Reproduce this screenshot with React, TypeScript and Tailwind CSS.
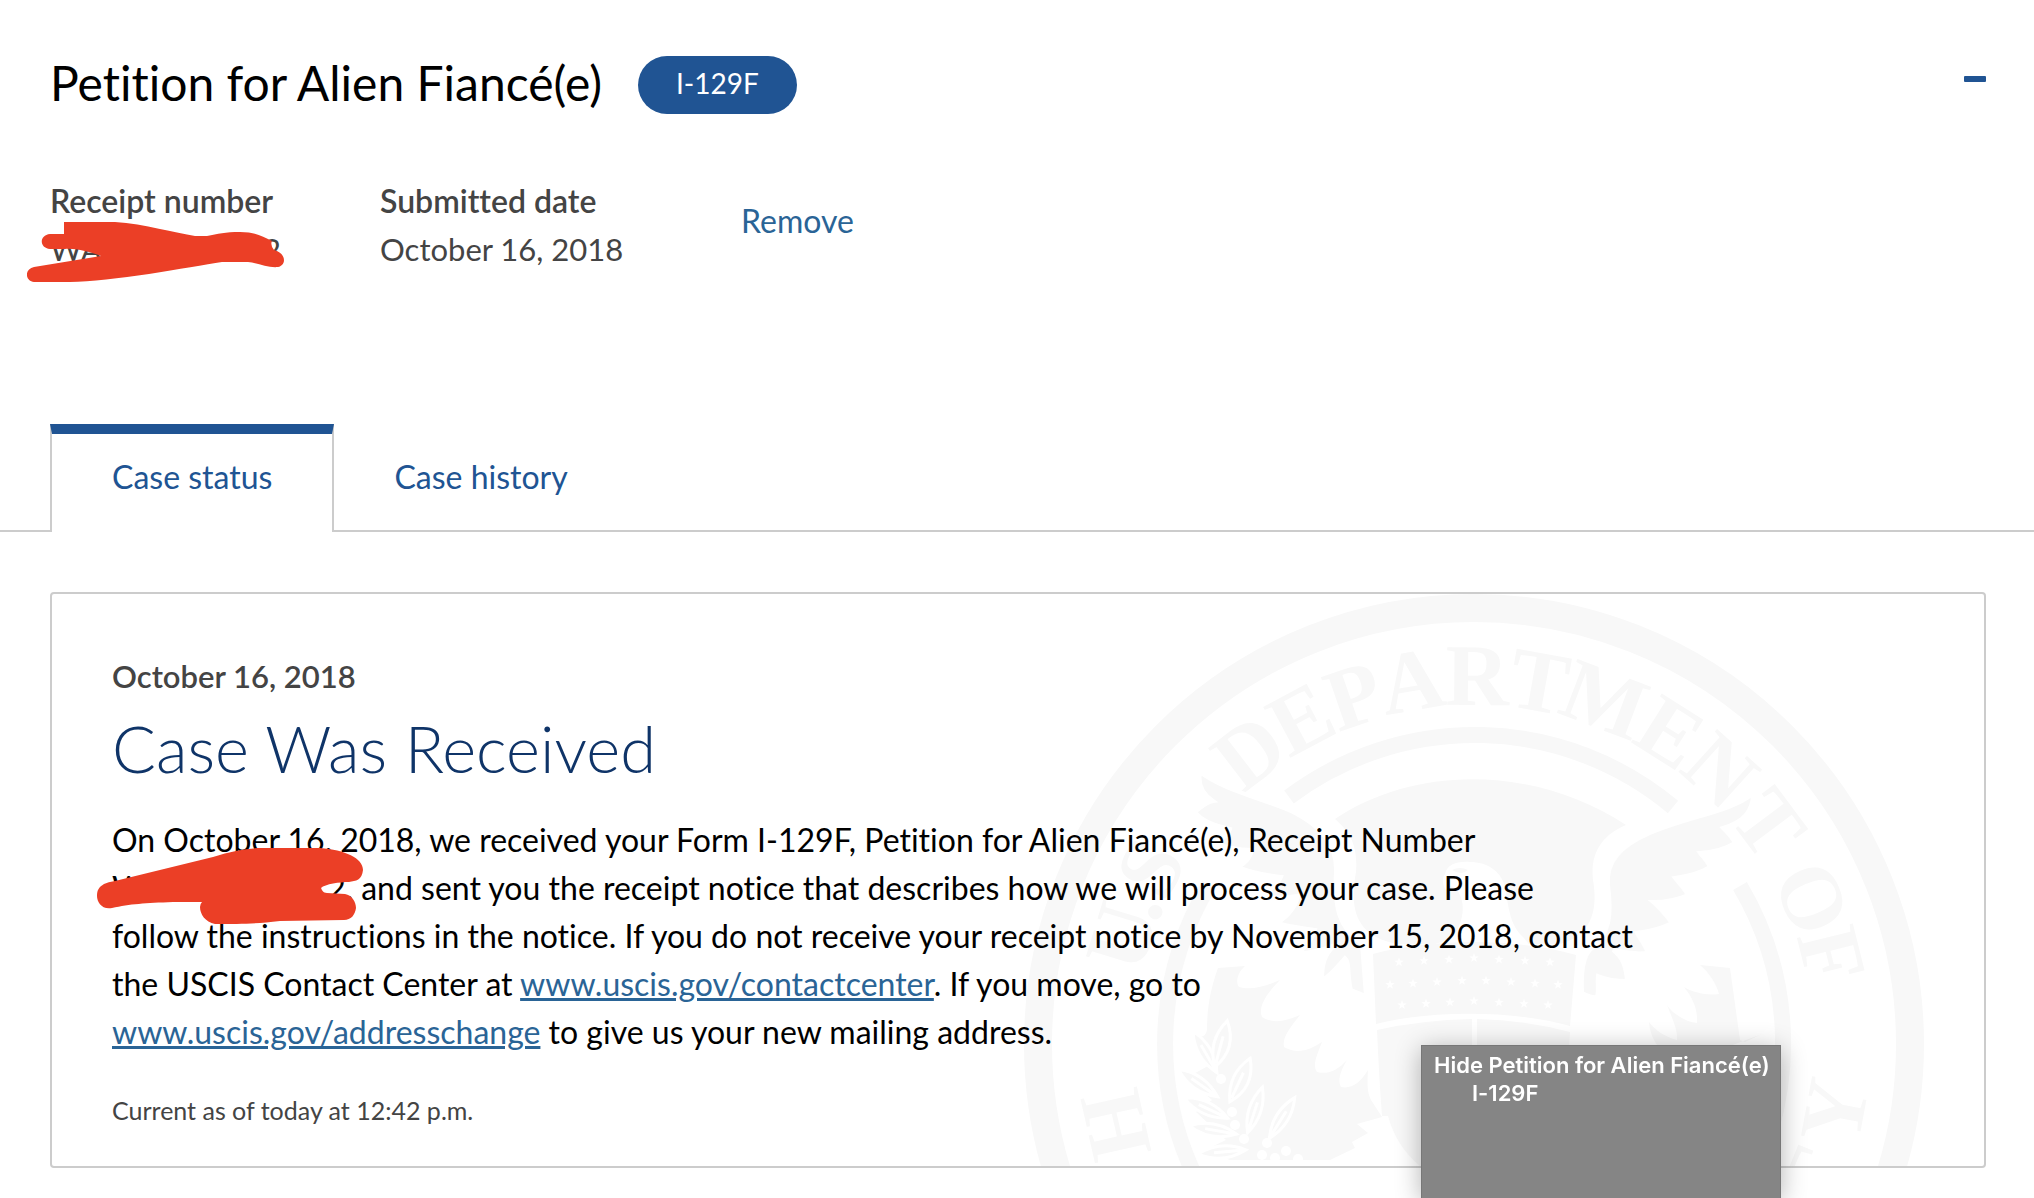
import { useState } from "react";

const TINT = "#f8f8f8";

const topLetters: [string, number][] = [
  ["U", -73], [".", -67.5], ["S", -61.5],
  ["D", -37.6], ["E", -28], ["P", -19], ["A", -9.7], ["R", 0.5],
  ["T", 10.2], ["M", 20.8], ["E", 32.2], ["N", 42], ["T", 53.2],
  ["O", 66.7], ["F", 76],
];
const bottomLetters: [string, number][] = [
  ["H", 77.3], ["O", 65], ["Y", -79.5], ["T", -68],
];

const starRows = [
  { y: 958, xs: [1399, 1424, 1449, 1474, 1499, 1525, 1550] },
  { y: 980, xs: [1390, 1413, 1437, 1462, 1486, 1511, 1535, 1558] },
  { y: 1001, xs: [1402, 1426, 1450, 1474, 1499, 1524, 1548] },
];

const leaves: [number, number, number, number][] = [
  [1205, 1052, 8, -30], [1221, 1044, 10, 15], [1198, 1083, 9, -55], [1240, 1080, 10, 25],
  [1206, 1108, 9, -65], [1255, 1110, 9, 18], [1282, 1118, 9, 32], [1213, 1130, 9, -80],
  [1222, 1152, 9, -95],
];
const berries = [
  [1221, 1079], [1232, 1112], [1244, 1139], [1267, 1143], [1286, 1151], [1262, 1155], [1235, 1125], [1298, 1159], [1275, 1158],
];

function Seal() {
  return (
    <svg viewBox="1024 594 900 900" className="absolute top-0 right-[60px] h-[900px] w-[900px]" aria-hidden="true">
      <circle cx="1474" cy="1044" r="436" fill="none" stroke={TINT} strokeWidth="28" />
      <g fill="none" stroke={TINT} strokeWidth="16">
        <path d="M1289 797A309 309 0 0 1 1673 807" />
        <path d="M1209 885A309 309 0 0 0 1193 1172" />
        <path d="M1740 886A309 309 0 0 1 1755 1172" />
      </g>
      <g fill={TINT} textAnchor="middle" fontFamily="Liberation Serif, serif" fontSize="88" fontWeight="700">
        {topLetters.map(([c, a], i) => (
          <text key={i} x="1474" y="705" transform={`rotate(${a} 1474 1044)`}>{c}</text>
        ))}
        {bottomLetters.map(([c, a], i) => (
          <text key={i} x="1474" y="1440" transform={`rotate(${a} 1474 1044)`}>{c}</text>
        ))}
      </g>
      {/* sky behind the eagle */}
      <path
        fill={TINT}
        d="M1335 819C1415 765 1535 765 1626 825C1602 835 1590 853 1593 880C1599 915 1588 936 1560 944L1396 944C1360 936 1348 915 1356 872C1358 845 1350 832 1335 819Z"
      />
      {/* head and neck */}
      <path
        fill="#ffffff"
        d="M1445 874C1447 864 1458 861 1470 862C1487 862 1500 871 1504 884C1509 904 1508 924 1524 938L1530 946H1428C1445 942 1456 936 1459 926C1464 914 1464 902 1459 893C1454 885 1449 884 1446 890C1442 884 1442 878 1445 874Z"
      />
      <path fill={TINT} d="M1452 870Q1460 866 1468 870Q1462 876 1452 870Z" />
      {/* wings */}
      <g fill={TINT} stroke="#ffffff" strokeWidth="4">
        <path d="M1200 772C1222 790 1268 800 1293 812C1325 828 1337 848 1336 872C1334 905 1338 928 1362 944L1366 996L1351 990C1347 975 1350 962 1345 958C1338 966 1330 976 1322 980C1322 965 1324 955 1335 945C1322 950 1310 953 1298 953C1308 945 1313 938 1315 930C1302 928 1290 927 1277 923C1290 915 1296 905 1298 896C1284 898 1268 898 1262 895C1272 889 1278 884 1281 877C1265 875 1250 872 1238 867C1248 862 1251 855 1252 850C1238 850 1222 846 1216 843C1224 838 1229 834 1230 829C1215 826 1201 820 1195 812C1202 806 1207 802 1213 801C1201 793 1198 783 1200 772Z" />
        <path d="M1753 794C1730 812 1690 816 1650 833C1620 846 1606 862 1608 885C1612 915 1610 935 1590 950C1583 957 1581 970 1582 993C1588 996 1592 998 1597 997C1599 990 1597 982 1598 976C1608 980 1618 981 1627 981C1626 967 1623 958 1613 950C1625 953 1637 954 1648 953C1645 945 1640 939 1637 933C1652 931 1662 928 1672 923C1665 914 1660 908 1653 902C1666 902 1679 899 1688 895C1684 888 1679 883 1675 878C1690 876 1702 872 1710 867C1707 861 1703 857 1700 853C1714 852 1727 848 1735 843C1732 837 1727 832 1723 828C1742 822 1753 812 1753 794Z" />
      </g>
      {/* shield */}
      <path fill={TINT} d="M1373 954C1435 938 1515 938 1576 955L1570 1026C1515 1010 1430 1010 1376 1024Z" />
      <path fill={TINT} d="M1377 1030Q1422 1020 1472 1019V1166H1420Q1396 1146 1388 1116H1382Q1379 1076 1377 1030Z" />
      <path fill={TINT} d="M1477 1019Q1525 1020 1570 1032L1562 1166H1477Z" />
      {starRows.map((row) =>
        row.xs.map((x) => (
          <path
            key={`${x}-${row.y}`}
            fill="#ffffff"
            transform={`translate(${x} ${row.y + Math.abs(x - 1474) / 18})`}
            d="M0 -5L1.2 -1.6L4.8 -1.5L1.9 .6L2.9 4L0 2L-2.9 4L-1.9 .6L-4.8 -1.5L-1.2 -1.6Z"
          />
        )),
      )}
      {/* leg feathers */}
      <path
        fill={TINT}
        d="M1218 968L1245 966C1238 972 1235 982 1239 987C1252 991 1268 985 1280 980C1265 995 1258 1008 1262 1017C1275 1025 1288 1020 1300 1015C1290 1028 1282 1037 1284 1047C1297 1055 1310 1050 1322 1042C1317 1055 1312 1065 1317 1072C1328 1075 1338 1070 1347 1060C1341 1070 1337 1080 1341 1087C1352 1089 1360 1083 1368 1070C1367 1085 1367 1095 1373 1103L1382 1117L1357 1124L1368 1133L1352 1142L1355 1148L1330 1160H1230L1205 1150L1226 1140L1196 1112L1212 1100L1186 1078L1208 1066L1194 1034C1202 1040 1206 1035 1207 1030C1207 1010 1210 990 1218 968Z"
      />
      <path
        fill={TINT}
        d="M1730 968L1700 965C1709 972 1717 985 1719 994C1707 996 1692 992 1684 987C1693 998 1698 1010 1697 1023C1685 1022 1672 1013 1667 1005C1672 1018 1678 1030 1677 1040C1665 1037 1655 1030 1649 1022C1650 1035 1655 1044 1664 1053L1640 1080L1762 1034L1745 1042L1740 1040Z"
      />
      {/* olive branch */}
      <g fill={TINT} stroke="#ffffff" strokeWidth="3">
        {leaves.map(([x, y, w, a]) => (
          <path key={`${x}-${y}`} transform={`translate(${x} ${y}) rotate(${a})`} d={w > 9 ? "M0 -24Q17 0 0 24Q-14 0 0 -24ZM0 20V-8" : "M0 -24Q12 0 0 24Q-12 0 0 -24ZM0 20V-8"} />
        ))}
      </g>
      {berries.map(([x, y]) => (
        <circle key={`${x}-${y}`} cx={x} cy={y} r="5" fill="#ffffff" />
      ))}
    </svg>
  );
}

function ReceiptMark() {
  return (
    <svg viewBox="27 221 258 60" className="absolute -top-[3px] -left-[23px] h-[60px] w-[258px] max-w-none" aria-hidden="true">
      <path
        fill="#eb3f26"
        d="M64 221H115C145 223 175 232 195 235H207C218 233 225 231 240 231C255 231 262 235 272 240Q270 244 274 249C286 252 287 264 278 266C268 267 258 262 248 261H222C190 266 110 281 70 281H34C25 280 24 268 34 266L101 255C90 251 75 247 65 248H50C39 247 39 234 50 233H64Z"
      />
    </svg>
  );
}

function NoticeMark() {
  return (
    <svg viewBox="97 848 267 77" className="absolute -top-4 -left-[15px] h-[77px] w-[267px] max-w-none" aria-hidden="true">
      <path
        fill="#eb3f26"
        d="M104 884Q108 882 115 881L213 857C232 851 248 848 262 848H320C345 850 363 858 363 870C362 880 356 881 349 882C340 882 325 884 321 888C322 890 323 893 327 893L345 894C352 895 356 902 356 908C355 915 351 920 344 920L280 921C255 924 240 924 215 924C205 922 200 914 200 907Q200 904 202 902H173C145 903 130 904 112 908C102 910 97 902 97 896C97 890 99 887 104 884Z"
      />
    </svg>
  );
}

export default function App() {
  const [tab, setTab] = useState("status");
  const active =
    "-mb-[2px] border-x-2 border-t-10 border-x-[#cccccc] border-t-[#205493] bg-white px-[60px] pt-[19px] pb-[31px] text-[32px] text-[#205493]";
  const idle = "-mb-[2px] border-t-10 border-transparent px-[60px] pt-[19px] pb-[31px] text-[32px] text-[#205493]";

  return (
    <main className="min-h-screen overflow-hidden bg-white pb-[30px] font-['Lato',sans-serif] text-[32px] leading-[48px] text-black [font-variant-ligatures:none]">
      <header className="flex items-start pt-14 pr-12 pl-[50px]">
        <h1 className="text-[48px] leading-[54px]">Petition for Alien Fiancé(e)</h1>
        <span className="ml-9 rounded-full bg-[#205493] px-[38px] pb-1 text-[28px] leading-[54px] text-white">I-129F</span>
        <button type="button" aria-label="Hide Petition for Alien Fiancé(e) I-129F" className="ml-auto pt-5 pb-5">
          <span className="block h-1.5 w-[22px] rounded-[1px] bg-[#205493]" />
        </button>
      </header>

      <div className="mt-[63px] flex items-start pl-[50px] text-[#444444]">
        <dl className="flex">
          <div className="w-[330px]">
            <dt className="font-semibold">Receipt number</dt>
            <dd className="relative flex w-[231px] justify-between text-[31px]">
              <span>WA</span>
              <span>2</span>
              <ReceiptMark />
            </dd>
          </div>
          <div className="w-[361px]">
            <dt className="font-semibold">Submitted date</dt>
            <dd className="text-[31px]">October 16, 2018</dd>
          </div>
        </dl>
        <a href="#remove" className="mt-5 text-[#2a6496]">Remove</a>
      </div>

      <div role="tablist" className="mt-[151px] flex border-b-2 border-[#cccccc] pl-[50px]">
        <button type="button" role="tab" aria-selected={tab === "status"} onClick={() => setTab("status")} className={tab === "status" ? active : idle}>
          Case status
        </button>
        <button type="button" role="tab" aria-selected={tab === "history"} onClick={() => setTab("history")} className={tab === "history" ? active : idle}>
          Case history
        </button>
      </div>

      <section className="relative mt-[60px] mr-12 ml-[50px] rounded-sm border-2 border-[#cccccc] px-[60px] pt-[58px] pb-[34px]">
        <div className="absolute inset-0 overflow-hidden">
          <Seal />
        </div>
        <div className="relative">
          <p className="text-[31px] font-semibold text-[#444444]">October 16, 2018</p>
          <h2 className="mt-2 text-[65px] leading-[80px] font-light text-[#0f3468]">Case Was Received</h2>
          <p className="mt-7 max-w-[1540px]">
            On October 16, 2018, we received your Form I-129F, Petition for Alien Fiancé(e), Receipt Number{" "}
            <span className="relative inline-flex w-[241px] justify-between">
              <span>W</span>
              <span>2,</span>
              <NoticeMark />
            </span>{" "}
            and sent you the receipt notice that describes how we will process your case. Please
            <br />
            follow the instructions in the notice. If you do not receive your receipt notice by November 15, 2018, contact
            the USCIS Contact Center at{" "}
            <a href="#contactcenter" className="text-[#2a6496] underline">www.uscis.gov/contactcenter</a>. If you move, go to
            <br />
            <a href="#addresschange" className="text-[#2a6496] underline">www.uscis.gov/addresschange</a> to give us your new
            mailing address.
          </p>
          <p className="mt-8 text-[25px] leading-[44px] text-[#444444]">Current as of today at 12:42 p.m.</p>
        </div>
      </section>

      <div
        role="tooltip"
        className="fixed right-[253px] bottom-0 h-[153px] w-[360px] border border-b-0 border-[#777777] bg-[#858585] px-3 pt-[5px] font-['Inter',sans-serif] text-[22px] leading-7 font-semibold whitespace-nowrap text-white shadow-[0_4px_24px_rgba(0,0,0,0.3)]"
      >
        <p>Hide Petition for Alien Fiancé(e)</p>
        <p className="pl-[38px]">I-129F</p>
      </div>
    </main>
  );
}
